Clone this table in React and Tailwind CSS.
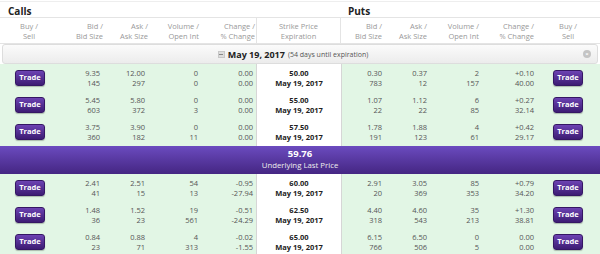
import React from "react";

const cols = "grid-cols-[58px_49px_43px_52px_55px_84px_46px_45px_55px_53px_60px]";

const rowsAbove = [
  { c: ["9.35", "145", "12.00", "297", "0", "0", "0.00", "0.00"], s: "50.00", p: ["0.30", "783", "0.37", "12", "2", "157", "+0.10", "40.00"] },
  { c: ["5.45", "603", "5.80", "372", "0", "3", "0.00", "0.00"], s: "55.00", p: ["1.07", "22", "1.12", "22", "6", "85", "+0.27", "32.14"] },
  { c: ["3.75", "360", "3.90", "182", "0", "11", "0.00", "0.00"], s: "57.50", p: ["1.78", "191", "1.88", "123", "4", "61", "+0.42", "29.17"] },
];

const rowsBelow = [
  { c: ["2.41", "41", "2.51", "15", "54", "13", "-0.95", "-27.94"], s: "60.00", p: ["2.91", "20", "3.05", "369", "85", "353", "+0.79", "34.20"] },
  { c: ["1.48", "36", "1.52", "23", "19", "561", "-0.51", "-24.29"], s: "62.50", p: ["4.40", "318", "4.60", "543", "35", "213", "+1.30", "38.81"] },
  { c: ["0.84", "23", "0.88", "71", "4", "313", "-0.02", "-1.55"], s: "65.00", p: ["6.15", "766", "6.50", "506", "0", "5", "0.00", "0.00"] },
];

function TradeButton() {
  return (
    <button className="w-[30px] h-[16px] rounded-[3px] bg-gradient-to-b from-[#6d43b3] to-[#3d1c74] border border-[#351764] text-white font-bold text-[7.5px] leading-none shadow-[0_1px_1px_rgba(0,0,0,0.25)]">
      Trade
    </button>
  );
}

function Pair({ top, bottom, pr }) {
  return (
    <div className={`flex flex-col justify-center items-end text-[7.5px] leading-[10px] text-[#555] ${pr}`}>
      <span>{top}</span>
      <span>{bottom}</span>
    </div>
  );
}

function OptionRow({ row }) {
  const { c, p, s } = row;
  return (
    <div className={`grid ${cols} h-[27.3px]`}>
      <div className="bg-[#e2f6e5] flex items-center justify-center pl-[2px]"><TradeButton /></div>
      <div className="bg-[#e2f6e5] flex justify-end"><Pair top={c[0]} bottom={c[1]} pr="pr-[7px]" /></div>
      <div className="bg-[#e2f6e5] flex justify-end"><Pair top={c[2]} bottom={c[3]} pr="pr-[5px]" /></div>
      <div className="bg-[#e2f6e5] flex justify-end"><Pair top={c[4]} bottom={c[5]} pr="pr-[4px]" /></div>
      <div className="bg-[#e2f6e5] flex justify-end border-r border-[#d6d6d6]"><Pair top={c[6]} bottom={c[7]} pr="pr-[3px]" /></div>
      <div className="bg-white flex flex-col items-center justify-center text-[7.5px] leading-[10px] font-bold text-[#222]">
        <span>{s}</span>
        <span>May 19, 2017</span>
      </div>
      <div className="bg-[#e2f6e5] flex justify-end border-l border-[#d6d6d6]"><Pair top={p[0]} bottom={p[1]} pr="pr-[5px]" /></div>
      <div className="bg-[#e2f6e5] flex justify-end"><Pair top={p[2]} bottom={p[3]} pr="pr-[5px]" /></div>
      <div className="bg-[#e2f6e5] flex justify-end"><Pair top={p[4]} bottom={p[5]} pr="pr-[8px]" /></div>
      <div className="bg-[#e2f6e5] flex justify-end"><Pair top={p[6]} bottom={p[7]} pr="pr-[6px]" /></div>
      <div className="bg-[#e2f6e5] flex items-center justify-center pr-[4px]"><TradeButton /></div>
    </div>
  );
}

function Head({ a, b, align = "items-end", pr = "", border = "" }) {
  return (
    <div className={`flex flex-col justify-center ${align} text-[7.5px] leading-[10px] text-[#999] ${pr} ${border}`}>
      <span>{a}</span>
      <span>{b}</span>
    </div>
  );
}

export default function App() {
  return (
    <div className="w-[600px] h-[254px] overflow-hidden bg-white font-['Open_Sans',sans-serif]">
      <div className="h-[2px] border-b border-[#eee]" />
      <div className={`grid ${cols} h-[16px] border-b border-[#e4e4e4] items-center`}>
        <div className="col-span-5 pl-[8px] pt-[2px] text-[10px] font-bold text-[#222] leading-none">Calls</div>
        <div />
        <div className="col-span-5 pl-[7px] pt-[2px] text-[10px] font-bold text-[#222] leading-none">Puts</div>
      </div>
      <div className={`grid ${cols} h-[26px] border-b border-[#e4e4e4]`}>
        <Head a="Buy /" b="Sell" align="items-center" />
        <Head a="Bid /" b="Bid Size" pr="pr-[4px]" />
        <Head a="Ask /" b="Ask Size" pr="pr-[2px]" />
        <Head a="Volume /" b="Open Int" pr="pr-[3px]" />
        <Head a="Change /" b="% Change" pr="pr-[1px]" border="border-r border-[#e4e4e4]" />
        <Head a="Strike Price" b="Expiration" align="items-center" border="border-r border-[#e4e4e4]" />
        <Head a="Bid /" b="Bid Size" pr="pr-[5px]" />
        <Head a="Ask /" b="Ask Size" pr="pr-[5px]" />
        <Head a="Volume /" b="Open Int" pr="pr-[8px]" />
        <Head a="Change /" b="% Change" pr="pr-[6px]" />
        <Head a="Buy /" b="Sell" align="items-center" pr="pr-[4px]" />
      </div>
      <div className="mx-[2px] h-[20px] border border-[#ddd] rounded-[3px] bg-gradient-to-b from-[#fbfbfb] to-[#ececec] flex items-center relative">
        <div className="flex-1 flex items-center justify-center gap-[3px] pr-[14px]">
          <span className="w-[7px] h-[7px] bg-[#ddd] border border-[#c8c8c8] flex items-center justify-center">
            <span className="w-[4px] h-px bg-[#888]" />
          </span>
          <span className="text-[9px] font-bold text-[#222] leading-none">May 19, 2017</span>
          <span className="text-[7px] text-[#555] leading-none">(54 days until expiration)</span>
        </div>
        <span className="absolute right-[6px] top-[5px] w-[8px] h-[8px] rounded-full bg-[#c4c4c4] flex items-center justify-center text-white text-[6px] leading-none font-bold">×</span>
      </div>
      {rowsAbove.map((r) => (
        <OptionRow key={r.s} row={r} />
      ))}
      <div className="h-[28px] bg-gradient-to-b from-[#6b4bbf] to-[#452683] flex flex-col items-center justify-center text-white">
        <span className="text-[9.5px] font-bold leading-[12px]">59.76</span>
        <span className="text-[7.8px] leading-[11px] text-[#eee]">Underlying Last Price</span>
      </div>
      {rowsBelow.map((r) => (
        <OptionRow key={r.s} row={r} />
      ))}
    </div>
  );
}
